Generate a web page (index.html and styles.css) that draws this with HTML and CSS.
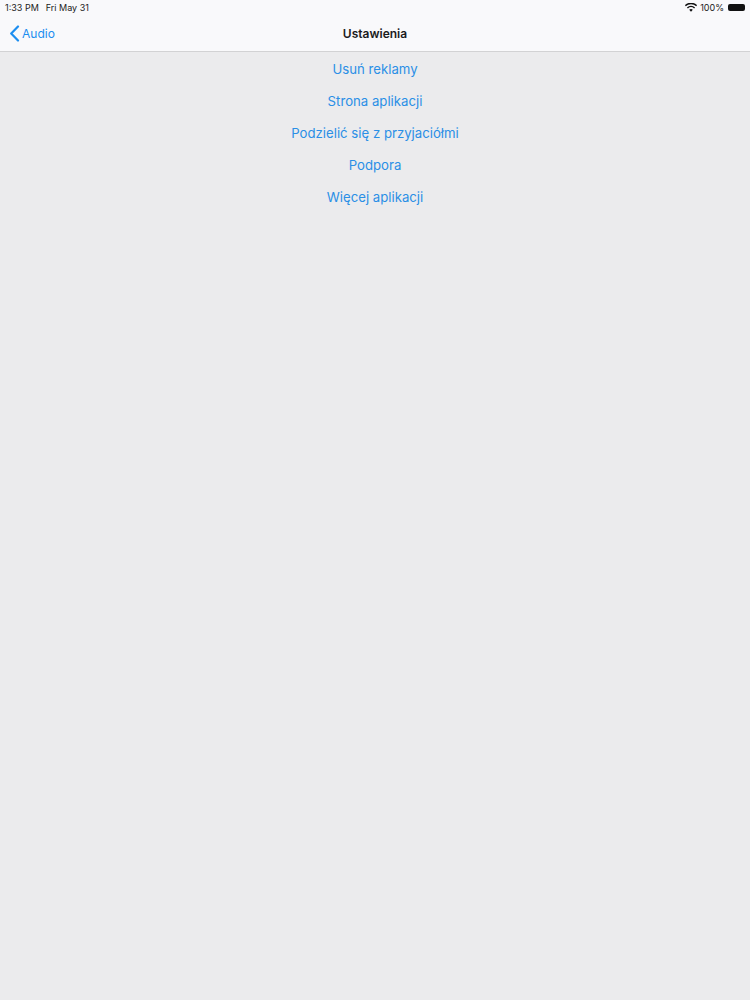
FILE: index.html
```html
<!DOCTYPE html>
<html lang="pl">
<head>
<meta charset="utf-8">
<title>Ustawienia</title>
<link rel="stylesheet" href="styles.css">
</head>
<body>
<header class="top">
  <div class="status">
    <div class="status-left"><span>1:33 PM</span><span>Fri May 31</span></div>
    <div class="status-right">
      <svg class="wifi" width="12" height="9" viewBox="0 0 12 9"><path d="M6 8.800 4.200 6.800a2.600 2.600 0 0 1 3.600 0z" fill="#111"/><path d="M2.900 5.500a4.600 4.600 0 0 1 6.200 0l1-1.100a6.100 6.100 0 0 0-8.200 0z" fill="#111"/><path d="M.8 3.200a7.700 7.700 0 0 1 10.400 0l1-1.100A9.200 9.200 0 0 0-.2 2.100z" fill="#111"/></svg>
      <span>100%</span>
      <div class="battery"></div>
    </div>
  </div>
  <nav class="nav">
    <a class="back">
      <svg width="11" height="17" viewBox="0 0 11 17"><path d="M9 1.500 2.200 8.500 9 15.500" fill="none" stroke="#1c8ef0" stroke-width="2.200" stroke-linecap="round" stroke-linejoin="round"/></svg>
      <span>Audio</span>
    </a>
    <div class="title">Ustawienia</div>
  </nav>
</header>
<main class="list">
  <a>Usuń reklamy</a>
  <a>Strona aplikacji</a>
  <a>Podzielić się z przyjaciółmi</a>
  <a>Podpora</a>
  <a>Więcej aplikacji</a>
</main>
</body>
</html>
```
FILE: styles.css
```css
* { box-sizing: border-box; }
html, body { margin: 0; height: 100%; }
body {
  background: #ebebed;
  font-family: Inter, "Liberation Sans", sans-serif;
  overflow: hidden;
}
.top {
  height: 52px;
  background: #f9f9fb;
  border-bottom: 1px solid #d2d2d4;
}
.status {
  height: 14px;
  padding: 0 5px;
  display: flex;
  justify-content: space-between;
  align-items: center;
  font-size: 9px;
  color: #222;
}
.status-left { display: flex; gap: 7px; }
.status-right { display: flex; align-items: center; gap: 3px; }
.battery {
  margin-left: 1px;
  width: 17px;
  height: 7px;
  border-radius: 2px;
  background: #111;
}
.nav {
  height: 38px;
  display: grid;
  grid-template-columns: 1fr auto 1fr;
  align-items: center;
  padding: 0 9px;
}
.back {
  display: flex;
  align-items: center;
  gap: 2px;
  color: #1c8ef0;
  font-size: 12px;
}
.title {
  font-size: 12px;
  font-weight: 600;
  color: #1b1b1d;
}
.list {
  display: flex;
  flex-direction: column;
  align-items: center;
  padding-top: 1px;
}
.list a {
  height: 32px;
  line-height: 32px;
  font-size: 13.200px;
  color: #2a8fe6;
}
```
